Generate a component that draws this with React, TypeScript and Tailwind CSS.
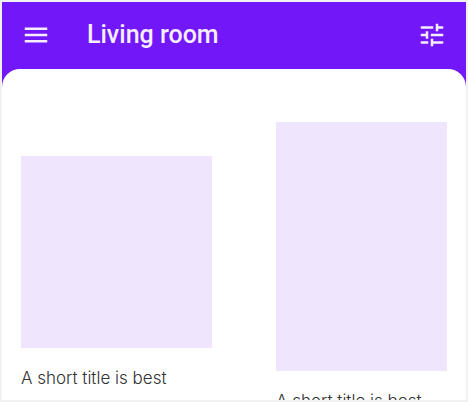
import { MdMenu, MdTune } from "react-icons/md";

type Item = { title: string; shape: string; offset: string };

const items: Item[] = [
  { title: "A short title is best", shape: "aspect-[191/192]", offset: "mt-[34px]" },
  { title: "A short title is best", shape: "aspect-[171/249]", offset: "mt-0" },
];

function TopBar() {
  return (
    <header className="flex h-[67px] shrink-0 items-center px-[19px] pb-0.5 text-[#f6edff]">
      <button type="button" aria-label="Open menu" className="shrink-0">
        <MdMenu size={30} />
      </button>
      <h1 className="ml-9 flex-1 font-['Roboto',sans-serif] text-[25px] leading-8 font-medium">
        Living room
      </h1>
      <button type="button" aria-label="Filter" className="shrink-0">
        <MdTune size={30} />
      </button>
    </header>
  );
}

function Card({ title, shape, offset }: Item) {
  return (
    <figure className={offset}>
      <div className={`w-full bg-[#efe5fd] ${shape}`} />
      <figcaption className="mt-4 whitespace-nowrap font-['Inter',sans-serif] text-[17px] leading-7 font-light text-[#333333]">
        {title}
      </figcaption>
    </figure>
  );
}

export default function App() {
  return (
    <div className="flex h-screen flex-col overflow-hidden border-2 border-[#f1f1f1] bg-[#7217f8]">
      <TopBar />
      <main className="min-h-0 flex-1 overflow-hidden rounded-t-[18px] bg-white px-[19px] pt-[53px]">
        <div className="grid grid-cols-[191fr_171fr] items-start gap-16">
          {items.map((item, index) => (
            <Card key={index} {...item} />
          ))}
        </div>
      </main>
    </div>
  );
}
